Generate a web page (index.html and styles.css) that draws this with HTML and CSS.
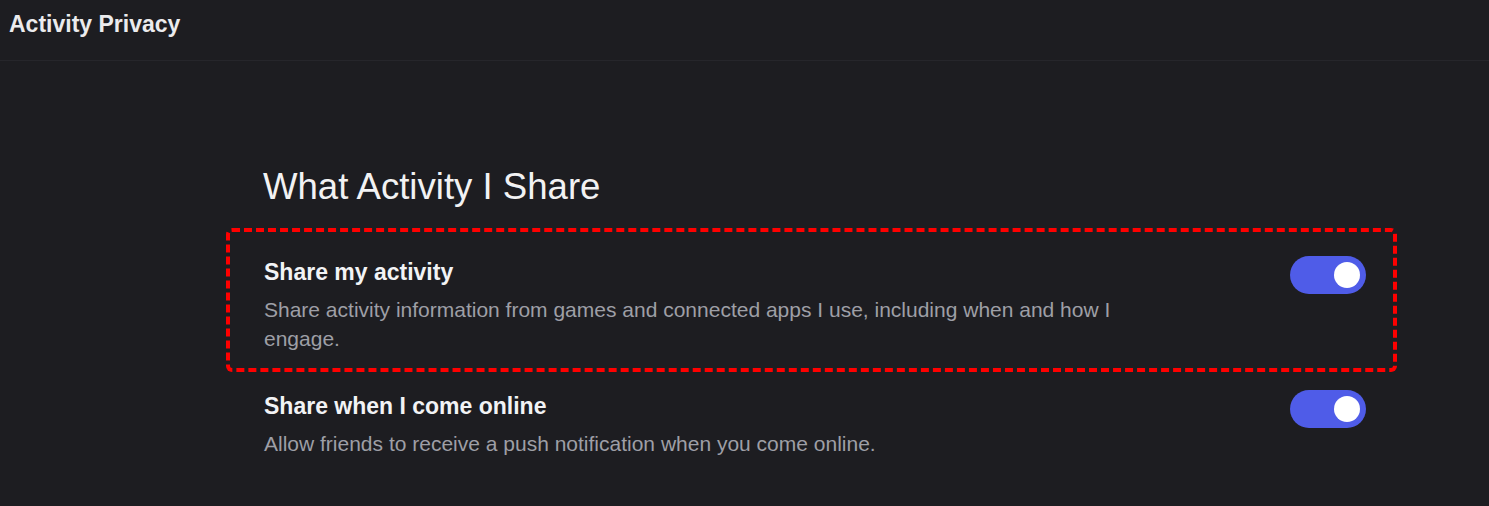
FILE: index.html
```html
<!DOCTYPE html>
<html lang="en">
<head>
    <title>Activity Privacy</title>
    <link rel="stylesheet" href="styles.css">
</head>
<body>
    <header class="topbar">
        <h1 class="topbar-title">Activity Privacy</h1>
    </header>

    <main class="content">
        <h2 class="section-title">What Activity I Share</h2>

        <div class="setting setting-marked">
            <div class="setting-text">
                <div class="setting-name">Share my activity</div>
                <div class="setting-desc">Share activity information from games and connected apps I use, including when and how I engage.</div>
            </div>
            <div class="toggle is-on"><span class="knob"></span></div>
        </div>

        <div class="setting setting-plain">
            <div class="setting-text">
                <div class="setting-name">Share when I come online</div>
                <div class="setting-desc">Allow friends to receive a push notification when you come online.</div>
            </div>
            <div class="toggle is-on"><span class="knob"></span></div>
        </div>
    </main>
</body>
</html>
```

FILE: styles.css
```css
body {
    margin: 0;
    background-color: #1d1d21;
    color: #f2f3f5;
    font-family: "Liberation Sans", Arial, sans-serif;
    height: 506px;
    overflow: hidden;
}

.topbar {
    height: 61px;
    box-sizing: border-box;
    padding: 10px 9px 0;
    border-bottom: 1px solid #26262b;
}

.topbar-title {
    margin: 0;
    font-size: 23px;
    line-height: 28px;
    font-weight: bold;
    color: #ebebed;
}

.content {
    margin-left: 226px;
    width: 1171px;
    padding-top: 104px;
}

.section-title {
    margin: 0 0 19px 37px;
    font-size: 36.6px;
    line-height: 44px;
    font-weight: normal;
    color: #f2f2f3;
}

.setting {
    display: flex;
    justify-content: space-between;
    align-items: flex-start;
    border: 4px solid transparent;
    padding: 0 27px 0 34px;
}

.setting-marked {
    border: 4px dashed #ff0000;
    border-radius: 6px;
    padding-top: 26px;
    padding-bottom: 15px;
}

.setting-plain {
    padding-top: 16px;
}

.setting-text {
    width: 870px;
}

.setting-name {
    font-size: 23px;
    line-height: 28px;
    font-weight: bold;
    color: #f2f3f5;
}

.setting-desc {
    margin-top: 10px;
    font-size: 21px;
    line-height: 28.5px;
    color: #9e9fa6;
}

.toggle {
    width: 76px;
    height: 38px;
    box-sizing: border-box;
    padding: 6px;
    border-radius: 19px;
    background-color: #4f5ce8;
    display: flex;
    justify-content: flex-end;
    margin-top: -2px;
}

.knob {
    width: 26px;
    height: 26px;
    border-radius: 50%;
    background-color: #ffffff;
}
```
